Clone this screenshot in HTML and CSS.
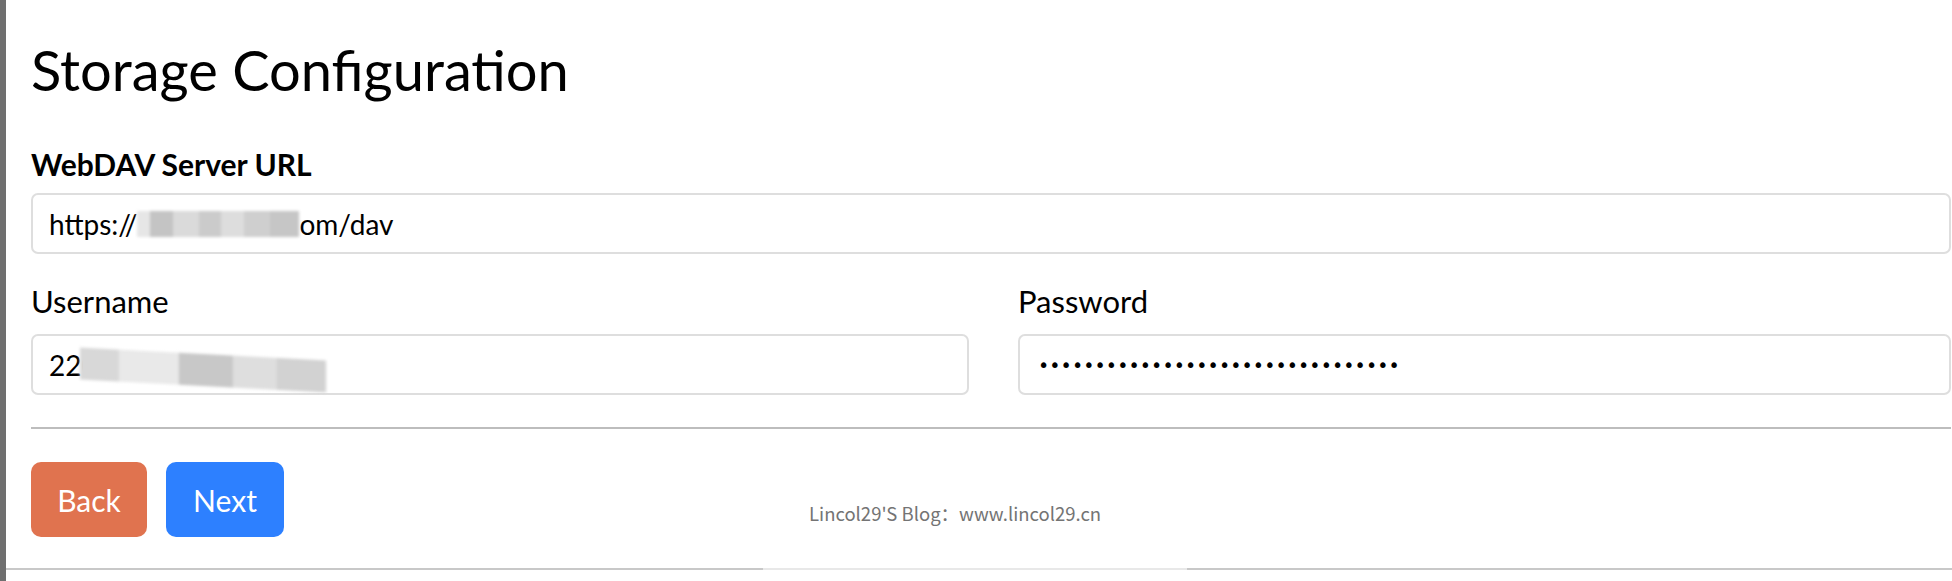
FILE: index.html
```html
<!DOCTYPE html>
<html lang="en">
<head>
    <meta charset="UTF-8">
    <meta name="viewport" content="width=device-width, initial-scale=1.0">
    <title>Storage Configuration</title>
    <link rel="stylesheet" href="styles.css">
</head>
<body>
    <div class="shell">
        <div class="edge"></div>
        <main class="page">
            <h1 class="title">Storage Configuration</h1>

            <form class="config" onsubmit="return false">
                <label class="field-title">WebDAV Server URL</label>
                <div class="field">https://<span class="mask mask-url"></span>om/dav</div>

                <div class="creds">
                    <div class="cred">
                        <label class="field-label">Username</label>
                        <div class="field">220<span class="mask mask-user"></span></div>
                    </div>
                    <div class="cred">
                        <label class="field-label">Password</label>
                        <div class="field dots">&bull;&bull;&bull;&bull;&bull;&bull;&bull;&bull;&bull;&bull;&bull;&bull;&bull;&bull;&bull;&bull;&bull;&bull;&bull;&bull;&bull;&bull;&bull;&bull;&bull;&bull;&bull;&bull;&bull;&bull;&bull;&bull;</div>
                    </div>
                </div>

                <hr class="divider">

                <div class="actions">
                    <button class="btn btn-back" type="button">Back</button>
                    <button class="btn btn-next" type="button">Next</button>
                </div>
            </form>

            <p class="watermark">Lincol29'S Blog：www.lincol29.cn</p>
            <div class="bottom-line"></div>
        </main>
    </div>
</body>
</html>
```

FILE: styles.css
```css
:root {
    --text: #000;
    --border: #dedede;
    --rule: #bdbdbd;
    --back: #e0734f;
    --next: #2d80ff;
}

* {
    margin: 0;
    padding: 0;
    box-sizing: border-box;
}

body {
    font-family: 'Lato', 'Noto Sans', sans-serif;
    color: var(--text);
    background: #fff;
    overflow: hidden;
}

.shell {
    display: flex;
    min-height: 581px;
}

.edge {
    width: 6px;
    flex-shrink: 0;
    background: #6f6f6f;
}

.page {
    position: relative;
    flex: 1;
    padding: 0 1px 0 25px;
}

.title {
    font-size: 56px;
    font-weight: 400;
    line-height: 1.2;
    margin-top: 36px;
}

.field-title {
    display: block;
    font-size: 30px;
    font-weight: 700;
    line-height: 1.2;
    margin-top: 43px;
    margin-bottom: 11px;
}

.field {
    display: flex;
    align-items: center;
    height: 61px;
    padding: 0 16px;
    border: 2px solid var(--border);
    border-radius: 7px;
    font-size: 28px;
    white-space: nowrap;
}

.mask {
    display: inline-block;
    height: 26px;
    filter: blur(1.5px);
}

.mask-url {
    width: 162px;
    background: linear-gradient(90deg, #e6e6e6 0 8%, #c4c4c4 8% 22%, #dadada 22% 38%, #cbcbcb 38% 52%, #dddddd 52% 66%, #cfcfcf 66% 82%, #c6c6c6 82% 100%);
}

.mask-user {
    width: 246px;
    height: 32px;
    margin-top: 10px;
    margin-left: -18px;
    background: linear-gradient(90deg, #d8d8d8 0 16%, #e9e9e9 16% 40%, #c8c8c8 40% 62%, #dedede 62% 80%, #d2d2d2 80% 100%);
    transform: skewY(3deg);
}

.creds {
    display: grid;
    grid-template-columns: 938px 1fr;
    column-gap: 49px;
    padding-top: 29px;
}

.cred {
    display: flex;
    flex-direction: column;
    gap: 14px;
}

.field-label {
    font-size: 31px;
    line-height: 1.2;
}

.dots {
    font-family: 'DejaVu Sans', sans-serif;
    font-size: 19px;
    letter-spacing: 0.1px;
    padding-left: 18px;
}

.divider {
    border: none;
    border-top: 2px solid var(--rule);
    margin-top: 32px;
}

.actions {
    display: flex;
    gap: 19px;
    margin-top: 33px;
}

.btn {
    height: 75px;
    padding: 0 26px;
    border: none;
    border-radius: 10px;
    color: #fff;
    font-family: 'Lato', 'Noto Sans', sans-serif;
    font-size: 30px;
}

.btn-back {
    width: 116px;
    background: var(--back);
}

.btn-next {
    width: 118px;
    background: var(--next);
}

.watermark {
    position: absolute;
    left: 803px;
    top: 500px;
    font-family: 'Noto Sans CJK SC', sans-serif;
    font-size: 18.5px;
    color: #747474;
}

.bottom-line {
    height: 2px;
    margin: 31px -1px 0 -25px;
    background: linear-gradient(90deg, #c8c8c8 0 757px, #e8e8e8 757px 1181px, #c8c8c8 1181px);
}
```
